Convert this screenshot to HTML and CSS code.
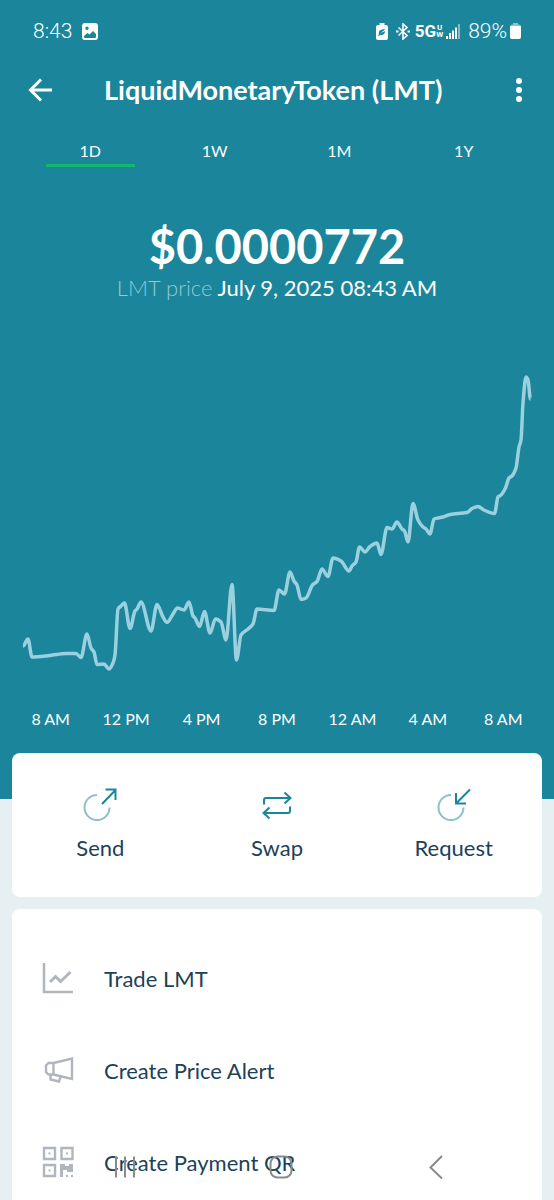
FILE: index.html
```html
<!DOCTYPE html>
<html lang="en">
<head>
  <meta charset="UTF-8">
  <meta name="viewport" content="width=device-width, initial-scale=1.0">
  <title>LiquidMonetaryToken (LMT)</title>
  <link rel="stylesheet" href="styles.css">
</head>
<body>
  <div class="screen">
    <div class="hero">
      <div class="status-bar">
        <span class="clock">8:43</span>
        <svg class="status-photo" width="16" height="17" viewBox="0 0 16 17">
          <path fill="currentColor" fill-rule="evenodd" d="M3 0h10a3 3 0 0 1 3 3v11a3 3 0 0 1-3 3H3a3 3 0 0 1-3-3V3a3 3 0 0 1 3-3zM2 13.500c0 1 .5 1.500 1.500 1.500h9c1 0 1.500-.5 1.500-1.500V11l-3-3-3.500 3.500L5.500 10 2 13zM5 3.500a1.700 1.700 0 1 0 0 3.400 1.700 1.700 0 0 0 0-3.400z"/>
        </svg>
        <div class="status-right">
          <svg width="12" height="17" viewBox="0 0 12 17">
            <path fill="currentColor" d="M3.500 0h5v2H10a2 2 0 0 1 2 2v11a2 2 0 0 1-2 2H2a2 2 0 0 1-2-2V4a2 2 0 0 1 2-2h1.500z"/>
            <path fill="#1a859b" d="M9.500 6C7 6.500 3 6.500 2.800 9.500l.2 1.500L2 12.500l1 .5 1-1.200c3 .7 5-.8 5-3.800L5 10c1-1.500 2.500-2 4.500-4z"/>
          </svg>
          <svg width="14" height="17" viewBox="0 0 14 17" fill="none" stroke="currentColor" stroke-width="1.600">
            <path d="M2.500 4.500l8.500 8-4 3.500V1l4 3.500-8.500 8"/>
            <path d="M0 8.500h2.500M11.500 8.500H14" stroke-width="2"/>
          </svg>
          <span class="network">5G</span>
          <span class="network-band"><span>U</span><span>W</span></span>
          <svg class="signal" width="14" height="15" viewBox="0 0 14 15" fill="currentColor">
            <path d="M0 12h2v3H0zM3 9h2v6H3zM6 6.500h2V15H6zM9 3.500h2V15H9z"/>
            <path d="M12 0h2v15h-2z" opacity=".45"/>
          </svg>
          <span class="battery-level">89%</span>
          <svg width="11" height="16" viewBox="0 0 11 16" fill="currentColor">
            <path d="M3 0h5v1.500h1.500L11 3H0l1.500-1.500H3z" opacity=".5"/>
            <path d="M0 3h11v11a2 2 0 0 1-2 2H2a2 2 0 0 1-2-2z"/>
          </svg>
        </div>
      </div>

      <header class="app-bar">
        <button class="icon-button" type="button" aria-label="Back">
          <svg width="24" height="24" viewBox="0 0 24 24" fill="none" stroke="currentColor" stroke-width="3">
            <path d="M13 1.500L2.500 12 13 22.500M2.500 12H24"/>
          </svg>
        </button>
        <h1>LiquidMonetaryToken (LMT)</h1>
        <button class="icon-button" type="button" aria-label="More options">
          <svg width="6" height="24" viewBox="0 0 6 24" fill="currentColor">
            <circle cx="3" cy="3" r="3"/><circle cx="3" cy="12" r="3"/><circle cx="3" cy="21" r="3"/>
          </svg>
        </button>
      </header>

      <nav class="ranges">
        <button class="range active" type="button">1D</button>
        <button class="range" type="button">1W</button>
        <button class="range" type="button">1M</button>
        <button class="range" type="button">1Y</button>
      </nav>

      <div class="price">$0.0000772</div>
      <div class="price-date"><span>LMT price</span> July 9, 2025 08:43 AM</div>

      <svg class="chart" viewBox="0 0 508 300">
        <path id="price-line" stroke-width="3.500"/>
      </svg>
      <div class="axis">
        <span>8 AM</span>
        <span>12 PM</span>
        <span>4 PM</span>
        <span>8 PM</span>
        <span>12 AM</span>
        <span>4 AM</span>
        <span>8 AM</span>
      </div>
    </div>

    <section class="card actions">
      <button class="action" type="button">
        <svg width="36" height="36" viewBox="0 0 36 36" fill="none" stroke="#1a859b" stroke-width="2">
          <path d="M15 9a12.500 12.500 0 1 0 12.500 12.500" stroke="#8cc0cb"/>
          <path d="M20 18L33.500 4M23.500 3.500h10V14"/>
        </svg>
        Send
      </button>
      <button class="action" type="button">
        <svg width="36" height="36" viewBox="0 0 36 36" fill="none" stroke="#1a859b" stroke-width="2">
          <path d="M5 18.500V14a2 2 0 0 1 2-2h24M25.500 6.500l6 5.500-6 5.500M31 20.500V25a2 2 0 0 1-2 2H5M10.500 21.500L4.500 27l6 5.500"/>
        </svg>
        Swap
      </button>
      <button class="action" type="button">
        <svg width="36" height="36" viewBox="0 0 36 36" fill="none" stroke="#1a859b" stroke-width="2">
          <path d="M15 9a12.500 12.500 0 1 0 12.500 12.500" stroke="#8cc0cb"/>
          <path d="M34 3.500L20.500 17M20 7v10.500h10"/>
        </svg>
        Request
      </button>
    </section>

    <ul class="card menu">
      <li>
        <a href="#">
          <svg width="32" height="32" viewBox="0 0 32 32" fill="none" stroke="#b0b5c0" stroke-width="2.500">
            <path d="M2 1v29h29"/>
            <path d="M8 20l5.500-5.500 5 5L28.500 10" stroke-width="3"/>
          </svg>
          Trade LMT
        </a>
      </li>
      <li>
        <a href="#">
          <svg width="32" height="32" viewBox="0 0 32 32" fill="none" stroke="#b0b5c0" stroke-width="2.400">
            <path d="M11.500 9L30 4.500v20.500L11.500 20.500H6.500L4 18v-6.500L6.500 9zM11.500 9v11.500M8.500 21v4.500l8.500 2 1.500-4.500"/>
          </svg>
          Create Price Alert
        </a>
      </li>
      <li>
        <a href="#">
          <svg width="32" height="32" viewBox="0 0 32 32" fill="none" stroke="#b0b5c0" stroke-width="2.400">
            <path d="M2 2h11v11H2zM19.500 2h11v11h-11zM2 19h11v11H2z"/>
            <path fill="#b0b5c0" stroke="none" d="M6.500 6.500h2v2h-2zM24 6.500h2v2h-2zM6.500 23.500h2v2h-2zM18 18h5v2h4v-2h4v8h-6v-2h-4v7h-3zM24 29h2v2h-2zM29 29h2v2h-2z"/>
          </svg>
          Create Payment QR
        </a>
      </li>
    </ul>

    <div class="system-nav">
      <button type="button" aria-label="Recents">
        <svg width="24" height="24" viewBox="0 0 24 24"><path d="M3 1.500v21M12 1.500v21M21 1.500v21"/></svg>
      </button>
      <button type="button" aria-label="Home">
        <svg width="24" height="24" viewBox="0 0 24 24"><rect x="1.500" y="1.500" width="21" height="21" rx="7"/></svg>
      </button>
      <button type="button" aria-label="Go back">
        <svg width="24" height="24" viewBox="0 0 24 24"><path d="M18 1L6.500 12.500 18 23.500"/></svg>
      </button>
    </div>
  </div>

  <script>

    // x, y pairs in the chart's viewBox
    const points = [
      [0, 276], [5, 269], [9, 287], [27, 285.500], [43, 283.500], [53, 283.500], [58, 287.500], [64, 264],
      [68, 278], [71, 282], [74, 294.500], [81, 294], [86, 299], [90, 293], [92, 285], [95, 239],
      [98, 236], [101.500, 233], [107, 258.500], [112, 241], [114, 239], [118, 232], [128, 261], [134, 234.500],
      [140, 247], [144, 252.500], [150, 244], [154.500, 238], [161, 240], [166, 232], [170, 246], [172, 248],
      [176.500, 256.500], [181.500, 241.500], [187, 263], [192.500, 249], [198, 252], [203, 270], [209, 214.500], [213.500, 290],
      [218, 265], [225, 259], [230, 254], [234, 239], [251, 240.500], [256, 220], [261.500, 224], [267, 202],
      [271, 211], [274, 215], [278, 229.500], [283, 228], [289.500, 215], [294, 211.500], [299, 199], [305, 206.500],
      [310, 188], [318, 191], [326, 201], [329, 196], [333, 192], [336.500, 177], [342, 182], [347, 176.500],
      [354, 173], [358, 184.500], [364, 157.500], [369, 159], [374, 152], [379, 159], [381.500, 161], [385, 172],
      [390, 133.500], [395, 150], [400, 157], [403, 159], [407, 164], [411, 149], [420, 147], [427, 144.500],
      [444, 142.500], [449, 138.500], [455, 136.500], [461, 140], [471.500, 143.500], [475, 127], [478, 125], [482.500, 118],
      [486, 108], [489, 106], [493, 98], [496, 77], [498, 70], [500, 33], [503, 7], [505, 10], [507.500, 29]
    ];

    // slope at a point: flat on peaks and valleys, so the line never overshoots
    function slopeAt (i) {
      if (i === 0 || i === points.length - 1) {
        return 0;
      }
      const [x0, y0] = points[i - 1];
      const [x1, y1] = points[i];
      const [x2, y2] = points[i + 1];
      const before = (y1 - y0) / (x1 - x0);
      const after = (y2 - y1) / (x2 - x1);
      return before * after <= 0 ? 0 : 2 * before * after / (before + after);
    }

    function drawLine (pathElem) {
      let d = `M${points[0]}`;
      for (let i = 1; i < points.length; i++) {
        const [x0, y0] = points[i - 1];
        const [x1, y1] = points[i];
        const dx = (x1 - x0) / 3;
        d += `C${x0 + dx},${y0 + dx * slopeAt(i - 1)} ${x1 - dx},${y1 - dx * slopeAt(i)} ${x1},${y1}`;
      }
      pathElem.setAttribute('d', d);
    }

    drawLine(document.querySelector('#price-line'));

  </script>
</body>
</html>
```
FILE: styles.css
```css
* {
  box-sizing: border-box;
}
body {
  margin: 0;
  background-color: #e6f0f3;
  color: #1c4259;
  font-family: Lato, sans-serif;
}
button {
  padding: 0;
  border: 0;
  background: none;
  color: inherit;
  font: inherit;
  cursor: pointer;
}
svg {
  display: block;
  flex: none;
}
.screen {
  position: relative;
  height: 100vh;
  overflow: hidden;
}
.hero {
  padding-bottom: 69px;
  background-color: #1a859b;
  color: #fff;
}

/* status bar */
.status-bar {
  display: flex;
  align-items: center;
  height: 62px;
  padding: 0 33px;
  font-family: Roboto, sans-serif;
}
.clock,
.battery-level {
  font-size: 21px;
  font-weight: 300;
}
.status-photo {
  margin-left: 10px;
}
.status-right {
  display: flex;
  align-items: center;
  margin-left: auto;
}
.network {
  margin-left: 5px;
  font-size: 17px;
  font-weight: 700;
}
.network-band {
  display: flex;
  flex-direction: column;
  align-items: center;
  font-size: 8px;
  font-weight: 700;
  line-height: 7px;
}
.signal {
  margin-left: 3px;
}
.status-right svg + svg {
  margin-left: 8px;
}
.battery-level {
  margin: 0 3px 0 8px;
}

/* title */
.app-bar {
  display: flex;
  align-items: center;
  height: 56px;
  padding: 0 24px;
}
.app-bar h1 {
  margin: 0 auto 0 48px;
  font-size: 27px;
  line-height: 32px;
  font-weight: 700;
}
.icon-button {
  display: flex;
  align-items: center;
  justify-content: center;
  width: 32px;
  height: 32px;
}
.icon-button:last-child {
  width: 22px;
}

.ranges {
  display: grid;
  grid-template-columns: repeat(4, 1fr);
  gap: 36px;
  padding: 18px 46px 0;
}
.range {
  height: 31px;
  border-bottom: 3px solid transparent;
  font-size: 16px;
}
.range.active {
  border-color: #14b86c;
}

.price {
  margin-top: 50px;
  font-size: 47px;
  line-height: 58px;
  font-weight: 700;
  text-align: center;
}
.price-date {
  font-size: 22px;
  line-height: 26px;
  text-align: center;
}
.price-date span {
  color: #90cad6;
  font-weight: 300;
}

.chart {
  width: calc(100% - 46px);
  margin: 69px 23px 0;
  overflow: visible;
}
.chart path {
  fill: none;
  stroke: #9bd0de;
  stroke-linejoin: round;
}
.axis {
  display: grid;
  grid-template-columns: repeat(7, 1fr);
  padding: 0 13px;
  margin-top: 38px;
  font-size: 16px;
  line-height: 22px;
  text-align: center;
}

/* cards */
.card {
  margin: 0 12px 12px;
  border-radius: 8px;
  background-color: #fff;
}
.actions {
  position: relative;
  display: grid;
  grid-template-columns: repeat(3, 1fr);
  margin-top: -46px;
  padding: 33px 0 35px;
}
.action {
  display: flex;
  flex-direction: column;
  align-items: center;
  gap: 12px;
  font-size: 22px;
  line-height: 28px;
}
.menu {
  padding: 23px 0;
  list-style: none;
}
.menu a {
  display: flex;
  align-items: center;
  gap: 30px;
  height: 92px;
  padding: 0 30px;
  color: inherit;
  font-size: 22px;
  text-decoration: none;
}

/* phone navigation, lies over the menu */
.system-nav {
  position: absolute;
  left: 0;
  right: 0;
  bottom: 0;
  display: flex;
  justify-content: space-between;
  padding: 0 106px 21px 113px;
}
.system-nav svg {
  fill: none;
  stroke: #8a8a8a;
  stroke-width: 2;
}
```
